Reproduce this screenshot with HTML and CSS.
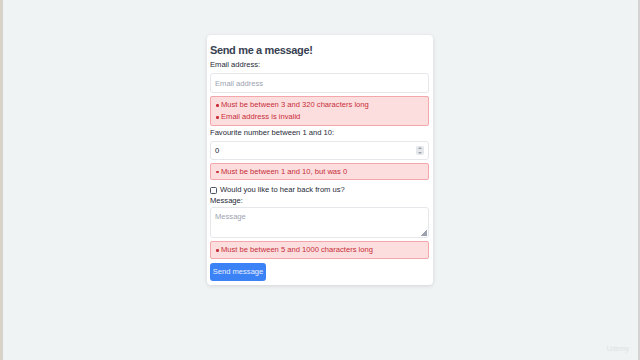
FILE: index.html
```html
<!DOCTYPE html>
<html>
<head>
    <title>Send me a message</title>
    <link rel="stylesheet" href="styles.css">
</head>
<body>
    <div class="page">
        <form class="card">
            <h2>Send me a message!</h2>

            <label class="label" for="email">Email address:</label>
            <input id="email" class="field" type="text" placeholder="Email address">
            <ul class="errors">
                <li>Must be between 3 and 320 characters long</li>
                <li>Email address is invalid</li>
            </ul>

            <label class="label" for="number">Favourite number between 1 and 10:</label>
            <div class="field number-field">
                <span>0</span>
                <span class="spinner"></span>
            </div>
            <ul class="errors">
                <li>Must be between 1 and 10, but was 0</li>
            </ul>

            <label class="check-row">
                <span class="box"></span>
                Would you like to hear back from us?
            </label>

            <label class="label msg-label" for="message">Message:</label>
            <div class="field textarea">
                <span class="placeholder">Message</span>
                <span class="grip"></span>
            </div>
            <ul class="errors">
                <li>Must be between 5 and 1000 characters long</li>
            </ul>

            <div>
                <button class="btn" type="button">Send message</button>
            </div>
        </form>
        <div class="watermark">Udemy</div>
    </div>
</body>
</html>
```

FILE: styles.css
```css
* {
    box-sizing: border-box;
}

body {
    margin: 0;
    background: #eff3f4;
    font-family: "Liberation Sans", Arial, sans-serif;
    color: #1f2937;
}

.page {
    position: relative;
    height: 360px;
    border-left: 3px solid #d9d3c7;
    border-right: 2px solid #d3d3d3;
    padding-top: 35px;
    display: flex;
    justify-content: center;
}

.card {
    width: 226px;
    height: 250px;
    margin-left: -1px;
    background: #fff;
    border-radius: 4px;
    box-shadow: 0 1px 4px rgba(0, 0, 0, 0.12);
    padding: 7px 4px 0 3px;
    display: flex;
    flex-direction: column;
}

h2 {
    margin: 0;
    font-size: 11px;
    line-height: 16px;
    letter-spacing: -0.35px;
    color: #374151;
}

.label {
    font-size: 7.6px;
    line-height: 10px;
    margin-top: 2px;
    margin-bottom: 3px;
    color: #1f2937;
}

.msg-label {
    margin-top: 0;
    margin-bottom: 1px;
}

.field {
    display: block;
    flex: none;
    width: 219px;
    height: 20px;
    border: 1px solid #e5e7eb;
    border-radius: 3px;
    background: #fff;
    font-family: inherit;
    font-size: 7.6px;
    padding: 0 4px;
    color: #111827;
    outline: none;
    margin: 0;
}

.field::placeholder {
    color: #9ca3af;
}

.number-field {
    height: 19px;
    display: flex;
    align-items: center;
    justify-content: space-between;
    padding-right: 4px;
}

.spinner {
    width: 8px;
    height: 9px;
    background: #e5e7eb;
    border-radius: 2px;
    position: relative;
}

.spinner::before,
.spinner::after {
    content: "";
    position: absolute;
    left: 2px;
    border-left: 2px solid transparent;
    border-right: 2px solid transparent;
}

.spinner::before {
    top: 1px;
    border-bottom: 2px solid #9ca3af;
}

.spinner::after {
    bottom: 1px;
    border-top: 2px solid #9ca3af;
}

.textarea {
    height: 31px;
    position: relative;
    padding-top: 4px;
}

.placeholder {
    color: #9ca3af;
}

.grip {
    position: absolute;
    right: 1px;
    bottom: 1px;
    width: 6px;
    height: 6px;
    background: linear-gradient(135deg, transparent 50%, #9ca3af 50%);
}

.errors {
    flex: none;
    margin: 3px 0 0;
    padding: 2px 0 1.5px;
    list-style: none;
    background: #fddede;
    border: 1px solid #f3a7ab;
    border-radius: 2px;
    color: #c62d3a;
    font-size: 7.6px;
    line-height: 12px;
}

.errors li {
    position: relative;
    padding-left: 10px;
}

.errors li::before {
    content: "";
    position: absolute;
    left: 5px;
    top: 5px;
    width: 2.5px;
    height: 2.5px;
    border-radius: 50%;
    background: #c62d3a;
}

.check-row {
    display: flex;
    align-items: center;
    gap: 3px;
    font-size: 7.6px;
    line-height: 12px;
    margin-top: 4px;
}

.box {
    width: 7px;
    height: 7px;
    border: 1px solid #4b5563;
    border-radius: 1.5px;
    background: #fff;
}

.btn {
    margin-top: 4px;
    width: 56px;
    height: 18px;
    border: none;
    border-radius: 3px;
    background: #3b82f6;
    color: #e8efff;
    font-family: inherit;
    font-size: 7.6px;
    padding: 0;
}

.watermark {
    position: absolute;
    right: 9px;
    bottom: 8px;
    font-size: 7px;
    color: #dde2e4;
}
```
